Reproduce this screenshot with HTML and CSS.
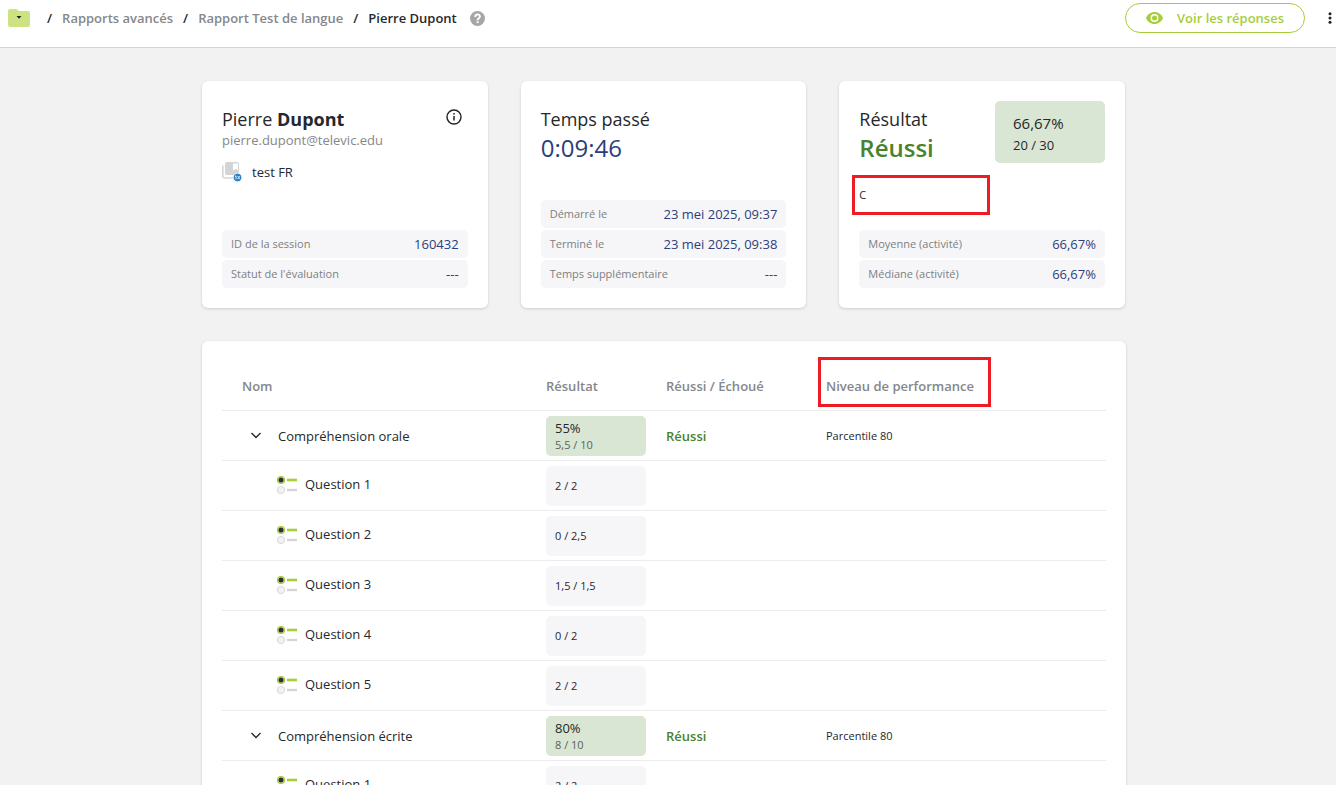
FILE: index.html
```html
<!DOCTYPE html>
<html lang="fr">
<head>
<meta charset="utf-8">
<title>Rapport Test de langue – Pierre Dupont</title>
<link rel="stylesheet" href="styles.css">
</head>
<body>
<svg class="sprite" aria-hidden="true">
  <symbol id="chevron" viewBox="0 0 12 8"><path d="M1.500 1 6 5.500 10.500 1" fill="none" stroke="#22262b" stroke-width="1.300"/></symbol>
  <symbol id="choice" viewBox="0 0 22 20">
    <circle cx="5" cy="6" r="3.500" fill="#d5e6a0" stroke="#a6ce39" stroke-width="1.200"/>
    <circle cx="5" cy="6" r="2.500" fill="#2c2f36"/>
    <path d="M11 6h10" stroke="#a6ce39" stroke-width="2.600"/>
    <circle cx="5" cy="16" r="3.600" fill="#f2f2f2" stroke="#d8d8d8"/>
    <path d="M11 16h10" stroke="#d5d5d5" stroke-width="2.400"/>
  </symbol>
</svg>
<div class="app">
  <header class="topbar">
    <nav class="crumbs" aria-label="Fil d'Ariane">
      <button class="icon-button" type="button" aria-label="Dossiers">
        <svg width="22" height="18" viewBox="0 0 22 18"><path d="M0 2Q0 0 2 0h6.500l2.500 2h9q2 0 2 2v12q0 2-2 2H2q-2 0-2-2z" fill="#cde381"/><path d="M8.500 7h5L11 9.800z" fill="#1d1d1d"/></svg>
      </button>
      <span class="sep sep-first">/</span>
      <a class="crumb" href="#">Rapports avancés</a>
      <span class="sep">/</span>
      <a class="crumb" href="#">Rapport Test de langue</a>
      <span class="sep">/</span>
      <span class="current">Pierre Dupont</span>
      <button class="icon-button help" type="button" aria-label="Aide">
        <svg width="15" height="15" viewBox="0 0 15 15"><circle cx="7.500" cy="7.500" r="7.500" fill="#a5a7a7"/><path d="M5.200 5.900C5.200 2.600 10 2.700 9.900 5.500 9.900 7.300 7.600 7.200 7.600 9.200" fill="none" stroke="#fff" stroke-width="1.900"/><path d="M6.600 10.200h2v1.900h-2z" fill="#fff"/></svg>
      </button>
    </nav>
    <div class="actions">
      <button class="answers" type="button">
        <svg width="17" height="12" viewBox="0 0 17 12"><path fill-rule="evenodd" d="M8.500 0C4.600 0 1.400 2.400 0 6c1.400 3.600 4.600 6 8.500 6S15.600 9.600 17 6C15.600 2.400 12.400 0 8.500 0zm0 10a4 4 0 1 1 0-8 4 4 0 0 1 0 8z" fill="#a6ce39"/><circle cx="8.500" cy="6" r="2.500" fill="#a6ce39"/></svg>
        Voir les réponses
      </button>
      <button class="icon-button" type="button" aria-label="Plus d'options">
        <svg width="4" height="12" viewBox="0 0 4 12" fill="#222"><circle cx="2" cy="1.700" r="1.500"/><circle cx="2" cy="6" r="1.500"/><circle cx="2" cy="10.300" r="1.500"/></svg>
      </button>
    </div>
  </header>
  <main class="content">
    <div class="report">
      <section class="cards">
        <article class="card">
          <div class="card-head">
            <div>
              <h1 class="title">Pierre <strong>Dupont</strong></h1>
              <p class="email">pierre.dupont@televic.edu</p>
            </div>
            <button class="icon-button info" type="button" aria-label="Informations">
              <svg width="16" height="16" viewBox="0 0 16 16"><circle cx="8" cy="8" r="7" fill="none" stroke="#222" stroke-width="1.400"/><path d="M8 7v4.500" stroke="#222" stroke-width="1.500"/><circle cx="8" cy="4.800" r=".9" fill="#222"/></svg>
            </button>
          </div>
          <div class="test">
            <svg width="20" height="20" viewBox="0 0 20 20"><path d="M.8 3.500V14q0 2 2 2H11" fill="none" stroke="#d6d6d6" stroke-width="1.600"/><path fill-rule="evenodd" d="M5 0h10q2 0 2 2v9q0 2-2 2H5q-2 0-2-2V2q0-2 2-2zm6 1.500v7l2.500-1.700L16 8.500v-7z" fill="#d4d4d4"/><circle cx="15.500" cy="15.500" r="4.300" fill="#2980c4" stroke="#fff" stroke-width=".8"/><path d="m13 14.500 1-.7v3.500m1.700-3.300 2 3m0-3-2 3" fill="none" stroke="#fff" stroke-width=".8"/></svg>
            test FR
          </div>
          <dl class="facts">
            <div class="fact"><dt>ID de la session</dt><dd>160432</dd></div>
            <div class="fact"><dt>Statut de l'évaluation</dt><dd>---</dd></div>
          </dl>
        </article>
        <article class="card">
          <div class="card-head">
            <div>
              <h2 class="title">Temps passé</h2>
              <p class="big time">0:09:46</p>
            </div>
          </div>
          <dl class="facts">
            <div class="fact"><dt>Démarré le</dt><dd>23 mei 2025, 09:37</dd></div>
            <div class="fact"><dt>Terminé le</dt><dd>23 mei 2025, 09:38</dd></div>
            <div class="fact"><dt>Temps supplémentaire</dt><dd>---</dd></div>
          </dl>
        </article>
        <article class="card">
          <div class="card-head">
            <div>
              <h2 class="title">Résultat</h2>
              <p class="big passed">Réussi</p>
            </div>
            <div class="score"><span class="score-main">66,67%</span><span>20 / 30</span></div>
          </div>
          <p class="grade">C</p>
          <dl class="facts">
            <div class="fact"><dt>Moyenne (activité)</dt><dd>66,67%</dd></div>
            <div class="fact"><dt>Médiane (activité)</dt><dd>66,67%</dd></div>
          </dl>
        </article>
      </section>
      <section class="card results">
        <table class="table">
          <colgroup><col class="col-name"><col class="col-score"><col class="col-status"><col></colgroup>
          <thead>
            <tr><th class="name-head" scope="col">Nom</th><th scope="col">Résultat</th><th scope="col">Réussi / Échoué</th><th class="level-head" scope="col">Niveau de performance</th></tr>
          </thead>
          <tbody>
            <tr><td><div class="group"><button class="icon-button" type="button" aria-label="Replier"><svg width="12" height="8"><use href="#chevron"/></svg></button>Compréhension orale</div></td><td><div class="pill pill-pass"><span class="percent">55%</span><span class="points">5,5 / 10</span></div></td><td class="status">Réussi</td><td>Parcentile 80</td></tr>
            <tr><td><div class="question"><svg width="22" height="20"><use href="#choice"/></svg>Question 1</div></td><td><div class="pill">2 / 2</div></td><td></td><td></td></tr>
            <tr><td><div class="question"><svg width="22" height="20"><use href="#choice"/></svg>Question 2</div></td><td><div class="pill">0 / 2,5</div></td><td></td><td></td></tr>
            <tr><td><div class="question"><svg width="22" height="20"><use href="#choice"/></svg>Question 3</div></td><td><div class="pill">1,5 / 1,5</div></td><td></td><td></td></tr>
            <tr><td><div class="question"><svg width="22" height="20"><use href="#choice"/></svg>Question 4</div></td><td><div class="pill">0 / 2</div></td><td></td><td></td></tr>
            <tr><td><div class="question"><svg width="22" height="20"><use href="#choice"/></svg>Question 5</div></td><td><div class="pill">2 / 2</div></td><td></td><td></td></tr>
            <tr><td><div class="group"><button class="icon-button" type="button" aria-label="Replier"><svg width="12" height="8"><use href="#chevron"/></svg></button>Compréhension écrite</div></td><td><div class="pill pill-pass"><span class="percent">80%</span><span class="points">8 / 10</span></div></td><td class="status">Réussi</td><td>Parcentile 80</td></tr>
            <tr><td><div class="question"><svg width="22" height="20"><use href="#choice"/></svg>Question 1</div></td><td><div class="pill">2 / 2</div></td><td></td><td></td></tr>
          </tbody>
        </table>
      </section>
    </div>
  </main>
</div>
</body>
</html>
```
FILE: styles.css
```css
*, *::before, *::after { box-sizing: border-box; }
body {
  margin: 0;
  font: 13px/18px "Open Sans", sans-serif;
  color: #25282c;
  background: #f2f2f2;
}
h1, h2, p, dl, dd { margin: 0; }
button { font: inherit; }
svg { display: block; flex: none; }
.sprite { position: absolute; width: 0; height: 0; }
.app { height: 100vh; display: flex; flex-direction: column; }
.icon-button { border: 0; padding: 0; background: none; cursor: pointer; }

.topbar {
  flex: none;
  height: 48px;
  padding: 3px 4px 0 8px;
  display: flex;
  justify-content: space-between;
  align-items: flex-start;
  background: #fff;
  border-bottom: 1px solid #d4d4d4;
}
.crumbs { display: flex; align-items: center; height: 30px; gap: 10px; font-weight: 600; }
.crumb { color: #85878a; text-decoration: none; }
.sep-first { margin-left: 7px; }
.help { margin-left: 3px; }
.actions { display: flex; align-items: center; gap: 23px; height: 30px; }
.answers {
  display: flex;
  align-items: center;
  gap: 14px;
  height: 30px;
  padding: 0 20px;
  border: 1px solid #a6ce39;
  border-radius: 15px;
  background: #fff;
  color: #a6ce39;
  font-weight: 600;
  cursor: pointer;
}

.content { flex: 1; overflow-y: auto; scrollbar-width: none; padding: 33px 8px 33px 0; }
.report { max-width: 924px; margin: 0 auto; display: grid; gap: 33px; }
.cards { display: grid; grid-template-columns: repeat(3, 1fr); gap: 33px; padding-right: 1px; }
.card {
  min-height: 227px;
  padding: 20px;
  display: flex;
  flex-direction: column;
  background: #fff;
  border-radius: 6px;
  box-shadow: 0 1px 3px rgba(0, 0, 0, .16);
}
.card-head { display: flex; justify-content: space-between; align-items: flex-start; }
.title { padding-top: 6px; font-size: 18px; line-height: 24px; font-weight: 400; }
.title strong { font-weight: 700; }
.email { color: #85878a; }
.info { margin: 8px 6px 0 0; }
.test { display: flex; align-items: center; gap: 10px; margin-top: 13px; }
.big { font-size: 24px; line-height: 34px; }
.time { color: #2c3e7b; font-weight: 500; }
.passed { color: #4b822c; font-weight: 600; }
.score {
  width: 110px;
  height: 62px;
  padding: 13px 18px 0;
  display: flex;
  flex-direction: column;
  gap: 4px;
  background: #d9e6d3;
  border-radius: 5px;
}
.score-main { font-size: 15px; font-weight: 500; }
.grade {
  align-self: flex-start;
  width: 138px;
  margin: 10px 0 0 -7px;
  padding: 8px 4px;
  border: 3px solid #ed1c24;
  font-size: 11px;
}
.facts { margin-top: auto; display: grid; gap: 2px; }
.fact {
  height: 28px;
  padding: 0 9px;
  display: flex;
  align-items: center;
  justify-content: space-between;
  border-radius: 5px;
  background: #f6f6f8;
}
.fact dt { font-size: 11px; color: #7d7f82; }
.fact dd { color: #2c3e7b; font-weight: 500; }

.table { width: 100%; table-layout: fixed; border-collapse: separate; border-spacing: 0; }
.col-name { width: 314px; }
.col-score { width: 120px; }
.col-status { width: 160px; }
.table th, .table td {
  height: 50px;
  padding: 5px 10px 4px;
  border-bottom: 1px solid #ececec;
  text-align: left;
  vertical-align: middle;
}
.table th { font-weight: 600; color: #85878a; }
.table td { font-size: 11px; }
.table .name-head { padding-left: 20px; }
.level-head { position: relative; }
.level-head::after {
  content: "";
  position: absolute;
  left: 2px;
  top: -4px;
  width: 173px;
  height: 50px;
  border: 3px solid #ed1c24;
}
.group, .question { display: flex; align-items: center; font-size: 13px; }
.group { gap: 16px; padding-left: 18px; }
.question { gap: 7px; padding: 0 0 4px 44px; }
.pill {
  width: 100px;
  height: 40px;
  padding: 0 9px;
  display: flex;
  flex-direction: column;
  justify-content: center;
  border-radius: 5px;
  background: #f6f6f8;
}
.pill-pass { background: #d9e6d3; }
.percent { font-size: 13px; line-height: 17px; font-weight: 500; }
.points { line-height: 16px; color: #5c6159; }
.table .status { font-size: 13px; font-weight: 600; color: #4b822c; }
```
